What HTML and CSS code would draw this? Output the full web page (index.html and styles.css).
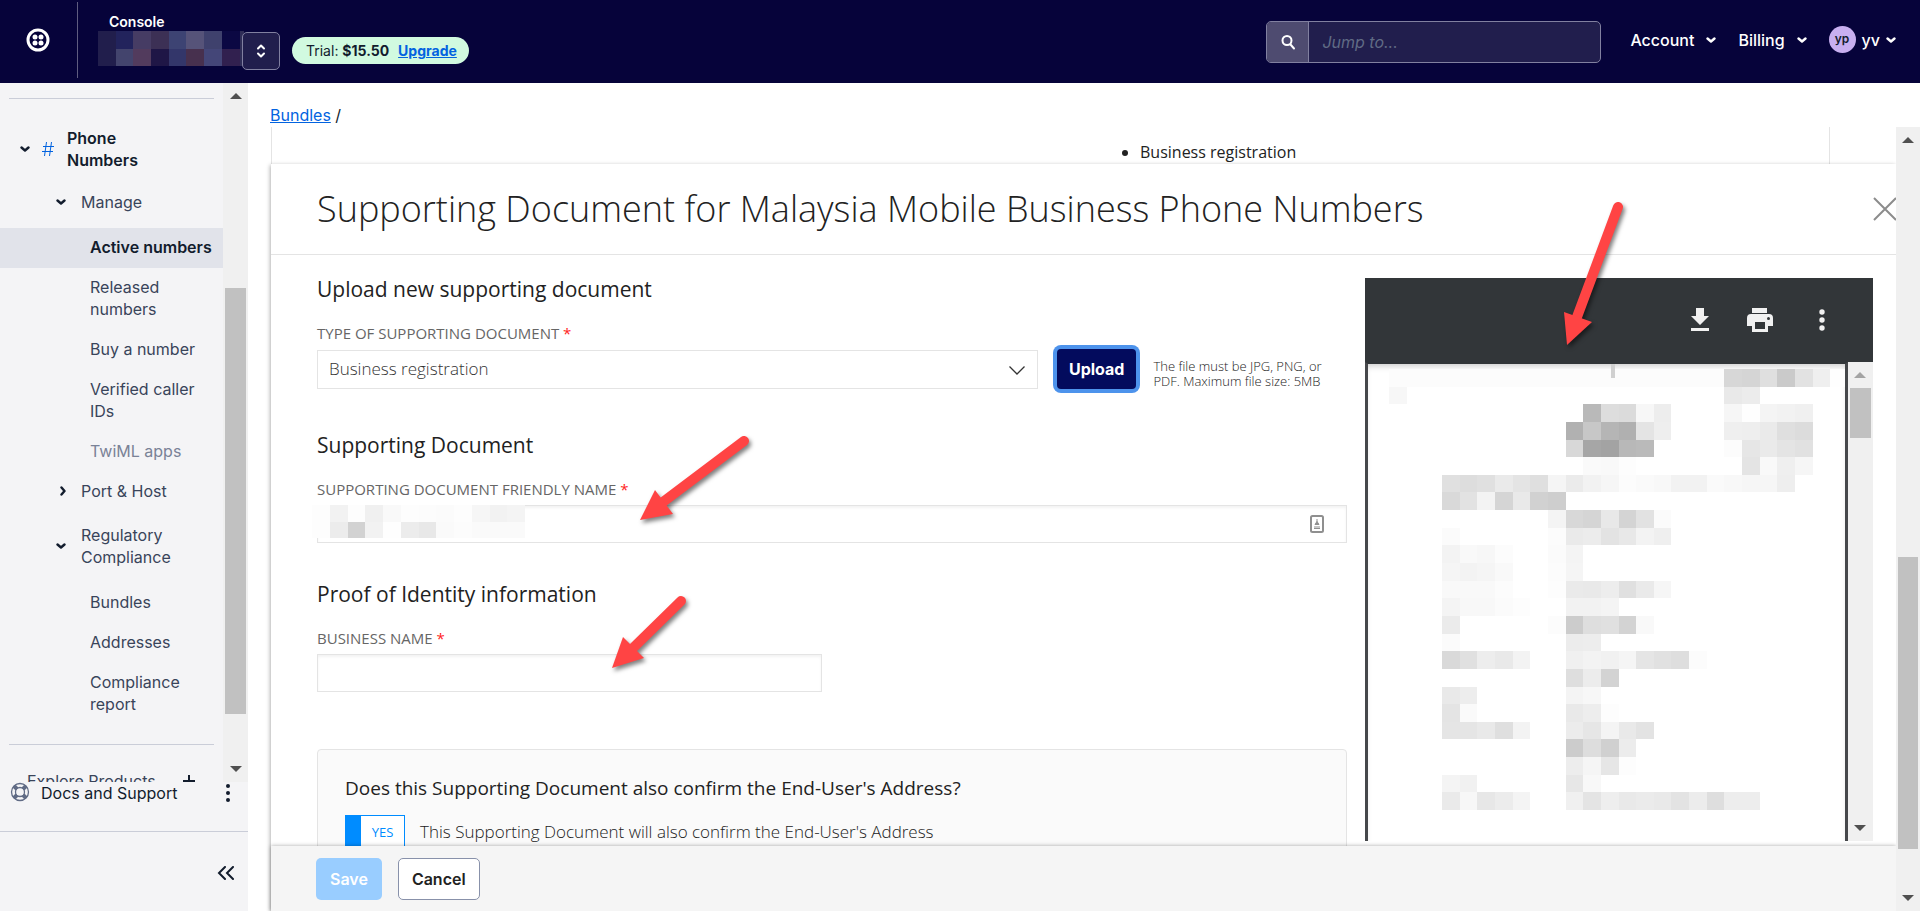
FILE: index.html
```html
<!DOCTYPE html>
<html lang="en">
<head>
  <meta charset="utf-8"/>
  <title>Bundles - Console</title>
  <link rel="stylesheet" href="styles.css">
</head>
<body>
  <header class="topbar">
    <a class="logo" href="#" aria-label="Home">
      <svg width="24" height="24" viewBox="0 0 24 24">
        <circle cx="12" cy="12" r="10" fill="none" stroke="#fff" stroke-width="3"/>
        <g fill="#fff">
          <circle cx="9" cy="9" r="2.5"/><circle cx="15" cy="9" r="2.5"/>
          <circle cx="9" cy="15" r="2.5"/><circle cx="15" cy="15" r="2.5"/>
        </g>
      </svg>
    </a>
    <div class="account">
      <div class="account-name">
        <span class="console">Console</span>
        <svg class="mosaic" id="accountMosaic" width="146" height="35" viewBox="0 0 8.25 2" preserveAspectRatio="none"></svg>
      </div>
      <button class="switcher" aria-label="Switch account">
        <svg width="10" height="14" viewBox="0 0 10 14" fill="none" stroke="#fff" stroke-width="2" stroke-linecap="round" stroke-linejoin="round"><path d="M2 4.5 5 1.5l3 3M2 9.5l3 3 3-3"/></svg>
      </button>
      <div class="trial">Trial: <b>$15.50</b> <a href="#">Upgrade</a></div>
    </div>
    <div class="search">
      <label for="jump" aria-label="Search">
        <svg width="16" height="16" viewBox="0 0 16 16" fill="none" stroke="#fff" stroke-width="2" stroke-linecap="round"><circle cx="7" cy="6.5" r="4.5"/><path d="M10.5 10.5 14 14.5"/></svg>
      </label>
      <input id="jump" type="text" placeholder="Jump to...">
    </div>
    <nav class="menus">
      <button>Account <svg class="chev" viewBox="0 0 10 8"><path d="M1.5 2.5 5 5.5l3.5-3"/></svg></button>
      <button>Billing <svg class="chev" viewBox="0 0 10 8"><path d="M1.5 2.5 5 5.5l3.5-3"/></svg></button>
      <button class="user"><span class="avatar">yp</span> yv <svg class="chev" viewBox="0 0 10 8"><path d="M1.5 2.5 5 5.5l3.5-3"/></svg></button>
    </nav>
  </header>

  <div class="page">
    <aside class="sidebar">
      <div class="nav-wrap">
        <nav class="nav">
          <hr>
          <a class="product" href="#"><svg class="chev" viewBox="0 0 10 8"><path d="M1.5 2.5 5 5.5l3.5-3"/></svg>
            <svg class="hash" width="12" height="16" viewBox="0 0 12 16"><path d="M4.5 1 2.5 15M9.5 1l-2 14M1 5.5h11M0 10.5h11"/></svg>
            <span>Phone Numbers</span></a>
          <a class="group" href="#"><svg class="chev" viewBox="0 0 10 8"><path d="M1.5 2.5 5 5.5l3.5-3"/></svg><span>Manage</span></a>
          <a class="item active" href="#">Active numbers</a>
          <a class="item" href="#">Released numbers</a>
          <a class="item" href="#">Buy a number</a>
          <a class="item" href="#">Verified caller IDs</a>
          <a class="item muted" href="#">TwiML apps</a>
          <a class="group closed" href="#"><svg class="chev right" viewBox="0 0 8 10"><path d="M2.5 1.5 5.5 5l-3 3.5"/></svg><span>Port &amp; Host</span></a>
          <a class="group" href="#"><svg class="chev" viewBox="0 0 10 8"><path d="M1.5 2.5 5 5.5l3.5-3"/></svg><span>Regulatory Compliance</span></a>
          <a class="item" href="#">Bundles</a>
          <a class="item" href="#">Addresses</a>
          <a class="item" href="#">Compliance report</a>
          <hr class="last">
          <a class="explore" href="#">Explore Products
            <svg width="14" height="14" viewBox="0 0 14 14"><path d="M7 1v12M1 7h12" stroke="#121c2d" stroke-width="2"/></svg></a>
        </nav>
        <div class="scrollbar nav-scroll">
          <svg width="12" height="6" viewBox="0 0 12 6"><path d="M0 6h12L6 0z"/></svg>
          <div class="track"><div class="thumb"></div></div>
          <svg width="12" height="6" viewBox="0 0 12 6"><path d="M0 0h12L6 6z"/></svg>
        </div>
      </div>
      <div class="docs">
        <svg width="20" height="20" viewBox="0 0 20 20" fill="none" stroke="#606b85">
          <circle cx="10" cy="10" r="8.5" stroke-width="1.3"/><circle cx="10" cy="10" r="4.5" stroke-width="1.3"/>
          <path d="M4 4l3 3M16 4l-3 3M4 16l3-3M16 16l-3-3" stroke-width="4"/>
        </svg>
        <a href="#">Docs and Support</a>
        <button aria-label="More"><svg width="4" height="18" viewBox="0 0 4 18" fill="#121c2d"><circle cx="2" cy="2" r="2"/><circle cx="2" cy="9" r="2"/><circle cx="2" cy="16" r="2"/></svg></button>
      </div>
      <div class="collapse">
        <button aria-label="Collapse"><svg width="18" height="14" viewBox="0 0 18 14" fill="none" stroke="#121c2d" stroke-width="2" stroke-linecap="round"><path d="M8 1 2 7l6 6M16 1l-6 6 6 6"/></svg></button>
      </div>
    </aside>

    <main class="main">
      <div class="breadcrumb"><a href="#">Bundles</a> /</div>
      <div class="scroller">
        <div class="content">
          <div class="behind">
            <ul><li>Business registration</li></ul>
          </div>
          <section class="modal">
            <div class="modal-head">
              <h1>Supporting Document for Malaysia Mobile Business Phone Numbers</h1>
              <button class="close" aria-label="Close"><svg width="24" height="24" viewBox="0 0 24 24"><path d="M1 1l22 22M23 1 1 23" stroke="#8c8c8c" stroke-width="2"/></svg></button>
            </div>
            <div class="modal-body">
              <form class="form" id="docForm">
                <h2>Upload new supporting document</h2>
                <label for="docType">Type of supporting document <i>*</i></label>
                <div class="upload-row">
                  <div class="select">
                    <select id="docType"><option>Business registration</option></select>
                    <svg width="16" height="9" viewBox="0 0 16 9" fill="none" stroke="#333"><path d="M.5.5 8 8 15.5.5" stroke-width="1.3"/></svg>
                  </div>
                  <button type="button" class="upload">Upload</button>
                  <p>The file must be JPG, PNG, or PDF. Maximum file size: 5MB</p>
                </div>

                <h2>Supporting Document</h2>
                <label for="friendly">Supporting document friendly name <i>*</i></label>
                <div class="field">
                  <input id="friendly" type="text">
                  <svg class="mosaic" id="nameMosaic" width="213" height="33" viewBox="0 0 12 2" preserveAspectRatio="none"></svg>
                  <svg class="autofill" width="14" height="18" viewBox="0 0 14 18"><rect x="1" y="1" width="12" height="16" rx="1.5" fill="#fff" stroke="#8f8f8f" stroke-width="2"/><path d="M7 4v3M7 6.5l-2 3h4zM4 12h6M4 13.5h6" stroke="#8f8f8f" fill="#8f8f8f"/></svg>
                </div>

                <h2>Proof of Identity information</h2>
                <label for="bizName">Business name <i>*</i></label>
                <div class="field half"><input id="bizName" type="text"></div>

                <div class="confirm">
                  <h3>Does this Supporting Document also confirm the End-User's Address?</h3>
                  <div class="confirm-row">
                    <button type="button" class="toggle" role="switch" aria-checked="true" aria-labelledby="confirmText">YES</button>
                    <span id="confirmText">This Supporting Document will also confirm the End-User's Address</span>
                  </div>
                </div>
              </form>

              <div class="viewer">
                <div class="viewer-bar">
                  <button aria-label="Download"><svg width="18" height="24" viewBox="0 0 18 24" fill="#f1f1f1"><path d="M5 0h8v8h5l-9 9-9-9h5zM0 20h18v3H0z"/></svg></button>
                  <button aria-label="Print"><svg width="26" height="24" viewBox="0 0 26 24"><path d="M5 0h15v5H5zM4 6h18q4 0 4 4v8h-5v6H5v-6H0v-8q0-4 4-4z" fill="#f1f1f1"/><path d="M8 14h10v7H8z" fill="#323639"/><circle cx="21.5" cy="10.5" r="1.5" fill="#323639"/></svg></button>
                  <button aria-label="More actions"><svg width="6" height="22" viewBox="0 0 6 22" fill="#f1f1f1"><circle cx="3" cy="3" r="2.7"/><circle cx="3" cy="11" r="2.7"/><circle cx="3" cy="19" r="2.7"/></svg></button>
                </div>
                <div class="viewer-body">
                  <div class="sheet">
                    <svg class="mosaic" id="pageMosaic" width="459" height="441" viewBox="0 0 26 25" preserveAspectRatio="none"></svg>
                    <span class="mark"></span>
                  </div>
                  <div class="scrollbar doc-scroll">
                    <svg class="dim" width="12" height="6" viewBox="0 0 12 6"><path d="M0 6h12L6 0z"/></svg>
                    <div class="track"><div class="thumb"></div></div>
                    <svg width="12" height="6" viewBox="0 0 12 6"><path d="M0 0h12L6 6z"/></svg>
                  </div>
                </div>
              </div>
            </div>
            <div class="modal-foot">
              <button class="save" form="docForm" disabled>Save</button>
              <button class="cancel">Cancel</button>
            </div>
          </section>
        </div>
        <div class="scrollbar page-scroll">
          <svg width="12" height="6" viewBox="0 0 12 6"><path d="M0 6h12L6 0z"/></svg>
          <div class="track"><div class="thumb"></div></div>
          <svg width="12" height="6" viewBox="0 0 12 6"><path d="M0 0h12L6 6z"/></svg>
        </div>
      </div>
    </main>
  </div>

  <!-- callout arrows -->
  <svg class="arrow arrow-name" width="120" height="100" viewBox="0 0 120 100"><path class="shaft" d="M109 11 28 72"/><path class="head" d="M5 90 20 60l18 24z"/></svg>
  <svg class="arrow arrow-business" width="90" height="90" viewBox="0 0 90 90"><path class="shaft" d="M74 11 27 57"/><path class="head" d="M5 78 16 47l21 21z"/></svg>
  <svg class="arrow arrow-doc" width="80" height="160" viewBox="0 0 80 160"><path class="shaft" d="M61 11 20 121"/><path class="head" d="M10 149 7 116l28 10z"/></svg>

  <script src="script.js"></script>
</body>
</html>
```
FILE: styles.css
```css
* { box-sizing: border-box; }
body {
  margin: 0;
  height: 100vh;
  display: flex;
  flex-direction: column;
  overflow: hidden;
  font-family: Inter, "Liberation Sans", sans-serif;
  font-size: 16px;
  line-height: 22px;
  color: #121c2d;
  background: #fff;
}
button {
  font: inherit;
  color: inherit;
  background: none;
  border: 0;
  padding: 0;
}
a { color: inherit; text-decoration: none; }
svg { display: block; flex: none; }
.chev {
  width: 10px;
  height: 8px;
  fill: none;
  stroke: currentColor;
  stroke-width: 2.4;
  stroke-linecap: round;
  stroke-linejoin: round;
}
.chev.right { width: 8px; height: 10px; }
.mosaic { shape-rendering: crispEdges; }

/* top bar */
.topbar {
  height: 83px;
  flex: none;
  display: flex;
  background: #06033a;
  color: #fff;
}
.logo {
  width: 78px;
  margin: 2px 0 5px;
  padding: 26px 0 0 26px;
  border-right: 1px solid #5f5d80;
}
.account { display: flex; padding-left: 20px; flex: 1; }
.account-name { width: 144px; padding-top: 13px; }
.console {
  display: block;
  padding-left: 11px;
  font-size: 14px;
  line-height: 18px;
  font-weight: 600;
}
.switcher {
  width: 38px;
  height: 38px;
  margin-top: 32px;
  display: grid;
  place-items: center;
  border: 1px solid #8180a0;
  border-radius: 5px;
  background: #211e4d;
}
.trial {
  height: 27px;
  margin: 37px 0 0 12px;
  padding: 0 12px 0 14px;
  border-radius: 14px;
  background: #d1fae0;
  color: #121c2d;
  font-size: 14px;
  line-height: 27px;
}
.trial a {
  margin-left: 5px;
  color: #0263e0;
  font-weight: 700;
  text-decoration: underline;
}
.search {
  width: 335px;
  height: 42px;
  margin-top: 21px;
  display: flex;
  border: 1px solid #8180a0;
  border-radius: 5px;
  background: #211e4d;
  overflow: hidden;
}
.search label {
  width: 42px;
  display: grid;
  place-items: center;
  background: #4e4b70;
  border-right: 1px solid #8180a0;
}
.search input {
  flex: 1;
  min-width: 0;
  border: 0;
  padding: 0 13px;
  background: none;
  color: #fff;
  font: inherit;
}
.search input::placeholder { color: #606b85; font-style: italic; }
.menus {
  display: flex;
  align-items: flex-start;
  gap: 22px;
  padding: 26px 24px 0 29px;
}
.menus button { display: flex; align-items: center; gap: 12px; height: 27px; font-weight: 500; }
.menus .user { gap: 6px; }
.avatar {
  width: 27px;
  height: 27px;
  border-radius: 50%;
  background: #c8aff0;
  color: #121c2d;
  font-size: 12px;
  line-height: 26px;
  font-weight: 600;
}

/* sidebar */
.page { flex: 1; min-height: 0; display: flex; }
.sidebar {
  width: 248px;
  flex: none;
  display: flex;
  flex-direction: column;
  background: #f4f4f6;
}
.nav-wrap { flex: 1; min-height: 0; display: flex; }
.nav { flex: 1; overflow: hidden; color: #39445a; }
.nav hr {
  height: 1px;
  margin: 15px 9px 0;
  border: 0;
  background: #cacdd8;
}
.nav hr.last { margin-top: 19px; }
.product {
  display: flex;
  align-items: center;
  padding: 28px 60px 8px 20px;
  color: #121c2d;
  font-weight: 600;
}
.hash {
  margin: 0 13px 0 12px;
  fill: none;
  stroke: #0263e0;
}
.group {
  display: flex;
  align-items: center;
  gap: 15px;
  padding: 12px 50px 15px 56px;
}
.group.closed { gap: 14px; padding: 8px 50px 10px 59px; }
.group .chev { color: #121c2d; }
.item { display: block; padding: 8px 12px 10px 90px; }
.item.active {
  padding-right: 0;
  background: #e1e3ea;
  color: #121c2d;
  font-weight: 600;
}
.item.muted { color: #7a8297; }
.explore {
  display: flex;
  justify-content: space-between;
  align-items: center;
  padding: 25px 27px;
}
.docs {
  height: 50px;
  display: flex;
  align-items: flex-start;
  padding: 0 18px 0 10px;
  border-bottom: 1px solid #cacdd8;
}
.docs a { flex: 1; padding-left: 11px; }
.docs button { margin-top: 2px; }
.collapse { height: 79px; padding: 31px 13px; text-align: right; }
.collapse button { display: inline-block; }

/* scrollbars */
.scrollbar {
  width: 25px;
  flex: none;
  display: flex;
  flex-direction: column;
  align-items: center;
  gap: 10px;
  padding: 10px 2px;
  background: #f0f0f0;
  fill: #505050;
}
.track { flex: 1; width: 100%; }
.thumb { background: #c1c1c1; }
.nav-scroll .track { padding-top: 179px; }
.nav-scroll .thumb { height: 426px; }
.doc-scroll .thumb { height: 50px; }
.doc-scroll .dim { fill: #a3a3a3; }
.page-scroll { width: 24px; }
.page-scroll .track { padding-top: 404px; }
.page-scroll .thumb { height: 292px; }

/* main */
.main { flex: 1; min-width: 0; display: flex; flex-direction: column; }
.breadcrumb { height: 44px; padding: 21px 22px 0; }
.breadcrumb a { color: #0263e0; text-decoration: underline; }
.scroller { flex: 1; min-height: 0; display: flex; }
.content {
  flex: 1;
  min-width: 0;
  display: flex;
  flex-direction: column;
  padding-left: 23px;
  overflow: hidden;
  font-family: "Open Sans", "Noto Sans", sans-serif;
}
.behind {
  height: 37px;
  margin-right: 66px;
  padding: 14px 0 0 52%;
  border: 1px solid #e4e4e4;
  border-width: 0 1px;
  color: #222;
}
.behind ul { margin: 0; padding-left: 23px; }
.modal {
  flex: 1;
  min-height: 0;
  display: flex;
  flex-direction: column;
  background: #fff;
  box-shadow: -1px 1px 4px rgba(0, 0, 0, 0.3);
  color: #222;
}
.modal-head {
  height: 91px;
  flex: none;
  display: flex;
  align-items: center;
  justify-content: space-between;
  padding-left: 46px;
  border-bottom: 1px solid #e4e4e4;
}
h1, h2, h3, p { margin: 0; font-weight: 400; }
h1 { font-size: 36px; line-height: 48px; font-weight: 300; white-space: nowrap; }
h2 { font-size: 21px; line-height: 28px; }
h3 { font-size: 19px; line-height: 24px; }
.close { margin-right: -1px; }
.modal-body {
  flex: 1;
  min-height: 0;
  overflow: hidden;
  display: grid;
  grid-template-columns: 67fr 33fr;
  gap: 18px;
  padding: 20px 23px 0 46px;
}
.form label {
  display: block;
  margin: 18px 0 4px;
  color: #666;
  font-size: 15px;
  line-height: 24px;
  text-transform: uppercase;
}
.form label i { color: #f22; font-style: normal; }
.upload-row {
  display: flex;
  align-items: center;
  height: 40px;
  margin-bottom: 42px;
}
.select { position: relative; flex: 1; }
.select select {
  appearance: none;
  display: block;
  width: 100%;
  height: 39px;
  padding: 0 11px;
  border: 1px solid #e4e4e4;
  border-radius: 0;
  background: #fff;
  color: #333;
  font: inherit;
  font-size: 17px;
  font-weight: 300;
}
.select svg { position: absolute; right: 13px; top: 16px; }
.upload {
  height: 40px;
  margin: 0 17px 0 19px;
  padding: 0 12px;
  border-radius: 4px;
  background: #030b5d;
  box-shadow: 0 0 0 4px #4d93ec;
  color: #fff;
  font-family: Inter, sans-serif;
  font-weight: 700;
}
.upload-row p {
  width: 194px;
  padding-top: 10px;
  font-size: 13px;
  line-height: 15px;
  font-weight: 300;
}
.field { position: relative; margin-bottom: 37px; }
.field input {
  display: block;
  width: 100%;
  height: 38px;
  padding: 0 11px;
  border: 1px solid #e4e4e4;
  box-shadow: inset 0 2px 3px #f3f3f3;
  font: inherit;
}
.field.half { width: 49%; margin-bottom: 57px; }
.field .mosaic { position: absolute; left: -5px; top: 0; }
.autofill { position: absolute; right: 23px; top: 10px; }
.confirm {
  height: 160px;
  padding: 26px 27px;
  border: 1px solid #e4e4e4;
  border-radius: 4px;
  background: #fafafa;
}
.confirm-row {
  display: flex;
  align-items: center;
  gap: 15px;
  margin-top: 15px;
  font-size: 17px;
  font-weight: 300;
}
.toggle {
  width: 60px;
  height: 33px;
  border: 1px solid #008cff;
  border-left-width: 16px;
  background: #fff;
  color: #008cff;
  font-size: 13px;
  font-weight: 400;
}

/* document preview */
.viewer {
  min-width: 0;
  display: flex;
  flex-direction: column;
  height: 563px;
  margin-top: 3px;
}
.viewer-bar {
  height: 84px;
  flex: none;
  display: flex;
  align-items: center;
  justify-content: flex-end;
  gap: 42px;
  padding-right: 48px;
  background: #323639;
}
.viewer-bar button + button { margin-left: -4px; }
.viewer-bar button:last-child { margin-left: 4px; }
.viewer-body { flex: 1; display: flex; min-height: 0; }
.sheet {
  position: relative;
  flex: 1;
  min-width: 0;
  padding: 5px 0 0 21px;
  border: 3px solid #46484b;
  border-top: 2px solid #323639;
  border-bottom: 0;
  background: #fff;
  box-shadow: inset 0 5px 6px -3px #ccc;
  overflow: hidden;
}
.mark {
  position: absolute;
  left: 51%;
  top: 0;
  width: 4px;
  height: 14px;
  background: #d0d0d0;
}

.modal-foot {
  position: relative;
  height: 65px;
  flex: none;
  display: flex;
  gap: 16px;
  padding: 12px 45px;
  background: #f5f5f5;
  box-shadow: 0 0 4px rgba(0, 0, 0, 0.35);
  font-family: Inter, sans-serif;
}
.modal-foot button {
  height: 42px;
  padding: 0 14px;
  border-radius: 5px;
  font-weight: 600;
}
.modal-foot .save { background: #99cdff; color: #fff; }
.modal-foot .cancel { padding: 0 13px; border: 1px solid #8891aa; background: #fff; }

/* arrows lie over the page */
.arrow {
  position: absolute;
  filter: drop-shadow(2px 3px 2px rgba(0, 0, 0, 0.5));
  pointer-events: none;
}
.shaft { stroke: #ff4444; stroke-width: 10; stroke-linecap: round; }
.head { fill: #ff4444; }
.arrow-name { left: 635px; top: 430px; }
.arrow-business { left: 607px; top: 590px; }
.arrow-doc { left: 1557px; top: 196px; }
```
FILE: script.js
```js
// blurred-out areas: [row, first column, colours of the cells]
const account = [
  [0, 0, "211e4c 22235c 463c64 3c3055 3d4373 565379 3f416d 0b0843 2f2d57"],
  [1, 0, "211e4c 43446d 523b5d 1f1646 33366a 47304e 444678 31204f 2f2d57"],
];
const friendlyName = [
  [0, 0, "fd f2 fd f0 f9 fd fc fb fd f6 f2 f4"],
  [1, 0, "fd ec d2 f2 fe ec e8 fa fc fa fa fa"],
];
const sheet = [
  [0, 0, "fc fc fc fc fc fc fc fc fc fc fc fc fc fc fc fc fc fc fc d7 d5 df ca e2 ef fe"],
  [1, 0, "f7"], [1, 19, "e9 ec"],
  [2, 11, "b9 dd db f7 ed"], [2, 19, "f6 fe f4 f2 f0"],
  [3, 10, "b1 c7 b5 b0 e4 ee"], [3, 19, "ef ee ea df dc"],
  [4, 10, "d8 a6 a3 b8 ba"], [4, 19, "fc e6 ea e4 e1"],
  [5, 11, "fa f9 fd"], [5, 20, "e4 f9 ef f6"],
  [6, 3, "e0 dd e0 ea e4 df f5 eb f2 f6 fc fa f8 f2 f2 fa f8 f6 f6 ee"],
  [7, 3, "d9 e2 f3 d5 e9 d1 ce"],
  [8, 9, "f4 d8 d5 e8 d4 e2 fb"],
  [9, 3, "fb"], [9, 9, "fc ea ec e3 e8 f3 ef"],
  [10, 3, "f3 f9 f7 fc"], [10, 9, "fb f4"],
  [11, 3, "f5 f3 f5 f9"], [11, 9, "fc f5"],
  [12, 3, "f9 f9 f9 fc"], [12, 9, "fd ea e9 ed e0 ea f6"],
  [13, 3, "f4 f8 f8 fb fd"], [13, 10, "f2 f2 f4"],
  [14, 3, "eb"], [14, 9, "fc cc de e0 d3 f9"],
  [15, 3, "fb"], [15, 10, "ec ed"],
  [16, 3, "d9 e0 ed e9 f3"], [16, 10, "f0 f3 f1 f5 e5 e1 de fc"],
  [17, 10, "de ec d3"],
  [18, 3, "e9 ed"], [18, 10, "f4 f7"],
  [19, 3, "e4 fa"], [19, 10, "e9 ed fd"],
  [20, 3, "e5 e5 e9 df f3"], [20, 10, "ec e6 f4 e9 e3"],
  [21, 10, "cc dd d0 ec"],
  [22, 10, "ed f5 e6 fd"],
  [23, 3, "f4 f1"], [23, 10, "e7 f8"],
  [24, 3, "ea f7 e7 ec f4"], [24, 10, "f0 e4 ee e9 eb e9 e3 ec de ed ed"],
];

function drawMosaic(id, runs) {
  const svg = document.getElementById(id);
  runs.forEach(([row, col, colors]) => {
    colors.split(" ").forEach((c, i) => {
      const rect = document.createElementNS("http://www.w3.org/2000/svg", "rect");
      rect.setAttribute("x", col + i);
      rect.setAttribute("y", row);
      rect.setAttribute("width", 1);
      rect.setAttribute("height", 1);
      rect.setAttribute("fill", "#" + (c.length === 2 ? c + c + c : c));
      svg.appendChild(rect);
    });
  });
}

drawMosaic("accountMosaic", account);
drawMosaic("nameMosaic", friendlyName);
drawMosaic("pageMosaic", sheet);
```
